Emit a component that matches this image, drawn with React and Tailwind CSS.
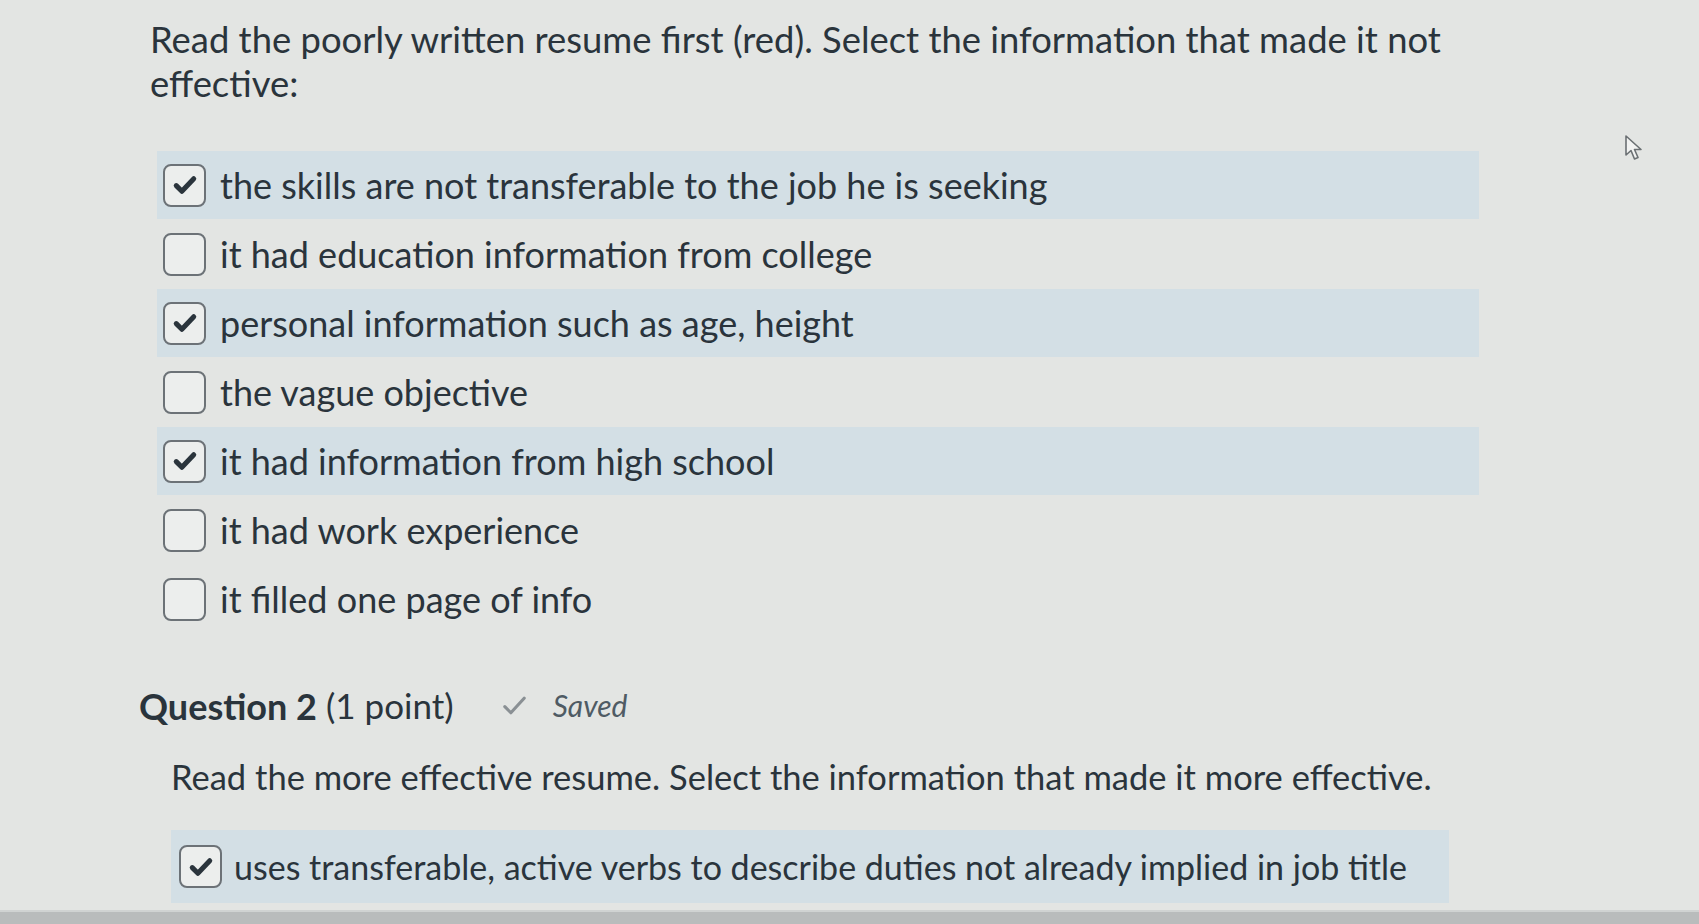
import React from "react";

function Check() {
  return (
    <svg viewBox="0 0 24 24" className="w-[30px] h-[30px]" fill="none" stroke="#2a343c" strokeWidth="4" strokeLinecap="round" strokeLinejoin="round">
      <path d="M5 12.5l4.5 4.5L19 7" />
    </svg>
  );
}

function Box({ checked }) {
  return (
    <div className="w-[43px] h-[43px] shrink-0 rounded-[8px] border-2 border-[#6c7277] bg-[#eceeed] flex items-center justify-center">
      {checked ? <Check /> : null}
    </div>
  );
}

function Row({ checked, text }) {
  return (
    <div className={"ml-[157px] w-[1322px] h-[68px] mb-[1px] flex items-center pl-[6px] " + (checked ? "bg-[#d3dfe5]" : "")}>
      <Box checked={checked} />
      <span className="ml-[14px] text-[36px] leading-none">{text}</span>
    </div>
  );
}

const opts = [
  [true, "the skills are not transferable to the job he is seeking"],
  [false, "it had education information from college"],
  [true, "personal information such as age, height"],
  [false, "the vague objective"],
  [true, "it had information from high school"],
  [false, "it had work experience"],
  [false, "it filled one page of info"],
];

export default function App() {
  return (
    <div className="relative w-[1699px] h-[924px] overflow-hidden bg-[#e3e5e3] text-[#2a343c] flex flex-col" style={{ fontFamily: "Lato, 'Open Sans', sans-serif" }}>
      <div className="pl-[150px] pt-[17px] text-[36.4px] leading-[44px]">
        Read the poorly written resume first (red). Select the information that made it not
        <br />
        effective:
      </div>
      <div className="mt-[46px] flex flex-col">
        {opts.map(([c, t], i) => (
          <Row key={i} checked={c} text={t} />
        ))}
      </div>
      <div className="mt-[49px] pl-[139px] flex items-center h-[45px]">
        <span className="text-[36px] font-bold">Question 2</span>
        <span className="ml-[9px] text-[35px]">(1 point)</span>
        <svg viewBox="0 0 24 24" className="ml-[46px] w-[29px] h-[29px]" fill="none" stroke="#8a9094" strokeWidth="2.6" strokeLinecap="round" strokeLinejoin="round">
          <path d="M4 13l5 5L20 6" />
        </svg>
        <span className="ml-[24px] text-[30px] italic text-[#4f5b64]">Saved</span>
      </div>
      <div className="mt-[26px] pl-[171px] text-[34.5px] leading-[45px]">
        Read the more effective resume. Select the information that made it more effective.
      </div>
      <div className="mt-[31px] ml-[171px] w-[1278px] h-[73px] bg-[#d3dfe5] flex items-center pl-[8px]">
        <Box checked={true} />
        <span className="ml-[12px] text-[34px] leading-none">uses transferable, active verbs to describe duties not already implied in job title</span>
      </div>
      <div className="mt-auto h-[14px] bg-[#b9bcbc] border-t-2 border-[#d0d3d2]" />
      <svg className="absolute left-[1624px] top-[134px] w-[22px] h-[28px]" viewBox="0 0 22 28" fill="#f2f3f2" stroke="#6b7073" strokeWidth="1.6" strokeLinejoin="round">
        <path d="M2 2 L2 21 L7 16.5 L10.5 25 L14 23.5 L10.5 15.5 L17 15.5 Z" />
      </svg>
    </div>
  );
}
